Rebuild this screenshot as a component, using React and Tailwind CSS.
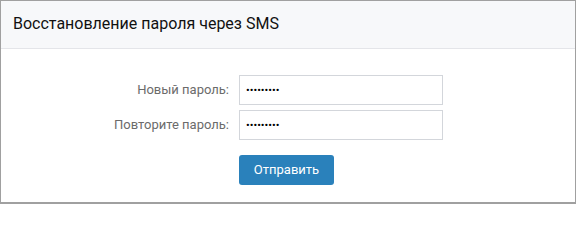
export default function App() {
  const font = { fontFamily: "Roboto, 'Noto Sans', Arial, sans-serif" };
  return (
    <div style={font} className="w-[576px] h-[204px] bg-white border border-[#a0a0a0] border-b-2 flex flex-col">
      <div className="h-[48px] shrink-0 bg-[#f7f8fa] border-b border-[#e4e5e9] flex items-center pl-[12px] text-[16px] text-[#111] pb-[2px]">
        Восстановление пароля через SMS
      </div>
      <div className="flex flex-col pt-[26px]">
        <div className="flex items-center h-[30px]">
          <div className="w-[228px] text-right text-[13px] text-[#6b6b6b]">Новый пароль:</div>
          <input
            type="password"
            readOnly
            defaultValue="123456789"
            className="ml-[10px] w-[204px] h-[30px] border border-[#d3d6db] px-[6px] text-[11px] text-black outline-none"
          />
        </div>
        <div className="flex items-center h-[30px] mt-[5px]">
          <div className="w-[228px] text-right text-[13px] text-[#6b6b6b]">Повторите пароль:</div>
          <input
            type="password"
            readOnly
            defaultValue="123456789"
            className="ml-[10px] w-[204px] h-[30px] border border-[#d3d6db] px-[6px] text-[11px] text-black outline-none"
          />
        </div>
        <div className="flex mt-[15px]">
          <button className="ml-[238px] w-[95px] h-[30px] rounded-[3px] bg-[#2a81bb] text-white text-[13px]">
            Отправить
          </button>
        </div>
      </div>
    </div>
  );
}
